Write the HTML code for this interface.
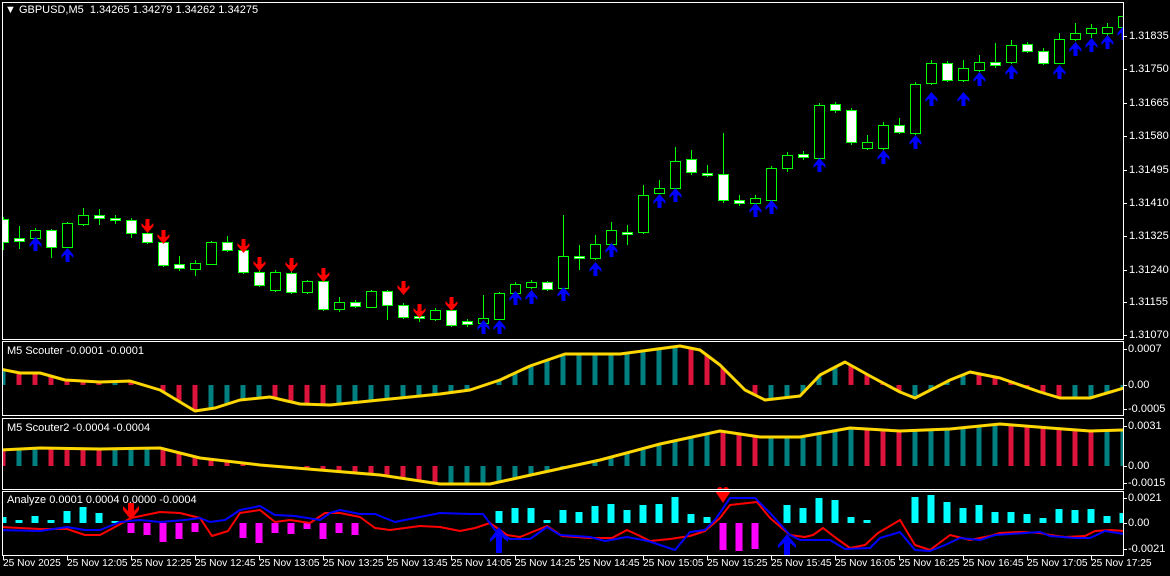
<!DOCTYPE html>
<html><head><meta charset="utf-8"><style>
html,body{margin:0;padding:0;background:#000;}
body{width:1170px;height:576px;overflow:hidden;position:relative;font-family:"Liberation Sans",sans-serif;font-size:11px;color:#fff;}
svg{position:absolute;left:0;top:0;}
.t{position:absolute;white-space:nowrap;line-height:12px;}
.tm{font-size:10.2px;}
</style></head><body>
<svg id="s" width="1170" height="576" xmlns="http://www.w3.org/2000/svg"></svg>
<div class="t" style="left:5px;top:4px">&#9660;&nbsp;GBPUSD,M5&nbsp; 1.34265 1.34279 1.34262 1.34275</div>
<div class="t" style="left:7px;top:345px">M5 Scouter -0.0001 -0.0001</div>
<div class="t" style="left:7px;top:422px">M5 Scouter2 -0.0004 -0.0004</div>
<div class="t" style="left:7px;top:494px">Analyze 0.0001 0.0004 0.0000 -0.0004</div>
<div class="t" style="left:1129px;top:30px">1.31835</div>
<div class="t" style="left:1129px;top:63px">1.31750</div>
<div class="t" style="left:1129px;top:97px">1.31665</div>
<div class="t" style="left:1129px;top:130px">1.31580</div>
<div class="t" style="left:1129px;top:164px">1.31495</div>
<div class="t" style="left:1129px;top:197px">1.31410</div>
<div class="t" style="left:1129px;top:230px">1.31325</div>
<div class="t" style="left:1129px;top:264px">1.31240</div>
<div class="t" style="left:1129px;top:296px">1.31155</div>
<div class="t" style="left:1129px;top:329px">1.31070</div>
<div class="t" style="left:1128px;top:343px">0.0007</div>
<div class="t" style="left:1128px;top:379px">0.00</div>
<div class="t" style="left:1128px;top:403px">-0.0005</div>
<div class="t" style="left:1128px;top:420px">0.0031</div>
<div class="t" style="left:1128px;top:460px">0.00</div>
<div class="t" style="left:1128px;top:477px">-0.0015</div>
<div class="t" style="left:1128px;top:492px">0.0021</div>
<div class="t" style="left:1128px;top:517px">0.00</div>
<div class="t" style="left:1128px;top:543px">-0.0021</div>
<div class="t tm" style="left:3px;top:558px">25 Nov 2025</div>
<div class="t tm" style="left:67px;top:558px">25 Nov 12:05</div>
<div class="t tm" style="left:131px;top:558px">25 Nov 12:25</div>
<div class="t tm" style="left:195px;top:558px">25 Nov 12:45</div>
<div class="t tm" style="left:259px;top:558px">25 Nov 13:05</div>
<div class="t tm" style="left:323px;top:558px">25 Nov 13:25</div>
<div class="t tm" style="left:387px;top:558px">25 Nov 13:45</div>
<div class="t tm" style="left:451px;top:558px">25 Nov 14:05</div>
<div class="t tm" style="left:515px;top:558px">25 Nov 14:25</div>
<div class="t tm" style="left:579px;top:558px">25 Nov 14:45</div>
<div class="t tm" style="left:643px;top:558px">25 Nov 15:05</div>
<div class="t tm" style="left:707px;top:558px">25 Nov 15:25</div>
<div class="t tm" style="left:771px;top:558px">25 Nov 15:45</div>
<div class="t tm" style="left:835px;top:558px">25 Nov 16:05</div>
<div class="t tm" style="left:899px;top:558px">25 Nov 16:25</div>
<div class="t tm" style="left:963px;top:558px">25 Nov 16:45</div>
<div class="t tm" style="left:1027px;top:558px">25 Nov 17:05</div>
<div class="t tm" style="left:1091px;top:558px">25 Nov 17:25</div>
<script>
var S=document.getElementById('s'),h='';
function R(x,y,w,hh,f){h+='<rect x="'+x+'" y="'+y+'" width="'+w+'" height="'+hh+'" fill="'+f+'"/>';}
function L(pts,c,w){h+='<polyline points="'+pts.map(function(p){return p[0]+','+p[1]}).join(' ')+'" fill="none" stroke="'+c+'" stroke-width="'+w+'" stroke-linejoin="round"/>';}
var C=[[219,242,1,217,250],[238,241,1,226,249],[230,238,0,228,243],[230,247,1,229,258],[223,247,0,222,248],[215,224,0,208,226],[215,218,1,209,225],[218,220,1,215,224],[220,233,1,218,238],[233,242,1,231,244],[242,265,1,240,267],[264,268,1,256,271],[263,269,0,260,276],[242,264,0,241,265],[242,250,1,236,252],[250,272,1,248,274],[272,285,1,270,287],[272,290,0,270,292],[273,292,1,271,294],[281,292,0,280,294],[281,309,1,280,311],[302,309,0,297,312],[302,306,1,300,308],[291,307,0,290,308],[291,305,1,290,320],[305,317,1,303,319],[316,318,1,312,322],[310,319,0,308,321],[310,325,1,308,327],[321,324,1,319,327],[318,323,0,295,330],[293,319,0,292,320],[284,293,0,282,295],[282,287,0,280,289],[282,289,1,281,291],[256,288,0,215,300],[256,258,1,245,270],[244,258,0,235,260],[230,244,0,222,246],[232,234,1,225,245],[195,232,0,185,234],[188,193,0,180,196],[161,188,0,147,190],[159,172,1,150,175],[173,175,1,165,177],[174,200,1,133,203],[200,203,1,195,206],[198,203,0,195,206],[168,200,0,166,202],[155,168,0,152,172],[154,157,1,151,160],[105,158,0,103,160],[104,110,1,102,113],[110,142,1,108,145],[142,148,0,135,150],[125,148,0,122,150],[125,132,1,118,134],[84,133,0,82,135],[63,83,0,60,85],[63,80,1,61,82],[68,80,0,60,82],[62,70,0,55,72],[62,65,1,43,68],[45,62,0,40,64],[44,51,1,42,53],[51,63,1,48,65],[39,63,0,33,64],[33,39,0,23,41],[28,33,0,24,38],[27,33,0,23,36],[16,27,0,2,29]];
function up(cx,y,c){h+='<polygon points="'+cx+','+y+' '+(cx+6)+','+(y+7)+' '+(cx+6)+','+(y+10)+' '+(cx+3)+','+(y+7)+' '+(cx+2)+','+(y+7)+' '+(cx+2)+','+(y+14)+' '+(cx-2)+','+(y+14)+' '+(cx-2)+','+(y+7)+' '+(cx-3)+','+(y+7)+' '+(cx-6)+','+(y+10)+' '+(cx-6)+','+(y+7)+'" fill="'+c+'"/>';}
function dn(cx,y,c){h+='<polygon points="'+cx+','+(y+14)+' '+(cx+6)+','+(y+7)+' '+(cx+6)+','+(y+4)+' '+(cx+3)+','+(y+7)+' '+(cx+2)+','+(y+7)+' '+(cx+2)+','+y+' '+(cx-2)+','+y+' '+(cx-2)+','+(y+7)+' '+(cx-3)+','+(y+7)+' '+(cx-6)+','+(y+4)+' '+(cx-6)+','+(y+7)+'" fill="'+c+'"/>';}
h+='<clipPath id="cm"><rect x="3" y="3" width="1120" height="336"/></clipPath><g clip-path="url(#cm)">';
C.forEach(function(c,i){var x=3+16*i;
 h+='<line x1="'+(x+0.5)+'" y1="'+c[3]+'" x2="'+(x+0.5)+'" y2="'+c[4]+'" stroke="#00ff00" stroke-width="1"/>';
 h+='<rect x="'+(x-4.5)+'" y="'+(c[0]+0.5)+'" width="10" height="'+(c[1]-c[0])+'" fill="'+(c[2]?'#fff':'#000')+'" stroke="#00ff00" stroke-width="1"/>';});
[[35,237],[67,248],[483,320],[499,320],[515,291],[531,290],[563,287],[595,262],[611,243],[659,194],[675,188],[755,203],[771,200],[819,158],[883,150],[915,135],[931,92],[963,92],[979,72],[1011,65],[1059,65],[1075,42],[1091,38],[1107,35],[1123,26]].forEach(function(a){up(a[0]+0.5,a[1],'#0000ff');});
[[147,219],[163,230],[243,239],[259,257],[291,258],[323,268],[403,281],[419,304],[451,297]].forEach(function(a){dn(a[0]+0.5,a[1],'#ff0000');});
h+='</g>';
function interp(P,x){for(var i=0;i<P.length-1;i++){if(x>=P[i][0]&&x<=P[i+1][0]){var t=(x-P[i][0])/(P[i+1][0]-P[i][0]);return P[i][1]+t*(P[i+1][1]-P[i][1]);}}return P[P.length-1][1];}
function pane(P,z,clip){h+='<g clip-path="url(#'+clip+')">';
 for(var i=0;i<71;i++){var x=3+16*i,y=interp(P,x),y2=interp(P,x+6),y0=interp(P,x-6);var col=(y2>y0)?'#dc143c':'#008080';if(Math.abs(y-z)<2)continue;R(x-2.5,Math.min(y,z),5,Math.abs(y-z),col);}
 L(P,'#ffd700',3);h+='</g>';}
h+='<clipPath id="c1"><rect x="3" y="343" width="1120" height="72"/></clipPath><clipPath id="c2"><rect x="3" y="420" width="1120" height="69"/></clipPath><clipPath id="c3"><rect x="3" y="493" width="1120" height="62"/></clipPath>';
pane([[0,369],[20,373],[40,373],[65,380],[100,382],[130,381],[160,390],[195,411],[215,408],[240,400],[270,397],[300,404],[330,405],[370,401],[400,398],[440,394],[470,390],[500,380],[530,366],[565,354],[620,354],[650,350],[680,346],[700,350],[720,365],[745,390],[765,400],[800,396],[820,375],[845,362],[870,376],[900,392],[915,398],[950,380],[970,372],[1000,378],[1040,392],[1060,398],[1090,398],[1124,388]],385,'c1');
pane([[0,450],[40,448],[100,449],[160,448],[200,458],[260,465],[320,470],[380,475],[440,484],[490,484],[540,473],[600,460],[660,444],[720,431],[760,437],[800,437],[850,428],[900,431],[950,429],[1000,424],[1050,428],[1090,431],[1124,430]],466,'c2');
h+='<g clip-path="url(#c3)">';
var hv={3:6,19:3,35:7,51:3,67:12,83:16,99:10,115:2,131:-10,147:-12,163:-19,179:-16,195:-9,243:-15,259:-20,275:-10,291:-11,307:-6,323:-16,339:-10,355:-12,499:12,515:15,531:15,547:3,563:13,579:11,595:17,611:19,627:13,643:18,659:19,675:26,691:9,707:6,723:-27,739:-28,755:-26,787:18,803:15,819:25,835:23,851:6,867:3,915:26,931:28,947:21,963:15,979:18,995:11,1011:11,1027:9,1043:5,1059:14,1075:13,1091:14,1107:7,1123:10};
for(var k in hv){var v=hv[k],x=+k;R(x-3.5,v>0?523-v:523,7,Math.abs(v),v>0?'#00ffff':'#ff00ff');}
L([[0,527],[40,529],[67,529],[85,535],[100,535],[115,527],[131,518],[160,512],[180,513],[200,518],[212,536],[228,531],[240,513],[260,510],[275,522],[290,520],[310,523],[325,513],[340,513],[360,517],[375,528],[390,530],[405,528],[420,526],[440,527],[460,531],[475,528],[490,523],[507,535],[520,537],[547,526],[562,536],[590,538],[612,538],[627,530],[640,536],[650,541],[670,539],[690,536],[705,531],[720,518],[730,505],[757,502],[770,518],[790,535],[805,537],[813,535],[823,528],[836,538],[850,548],[865,545],[878,533],[900,520],[915,545],[930,550],[950,535],[970,540],[990,536],[1000,533],[1020,532],[1040,533],[1050,535],[1065,537],[1085,536],[1095,531],[1110,530],[1124,531]],'#ff0000',2);
L([[0,530],[40,531],[67,527],[85,530],[100,530],[120,522],[140,520],[160,522],[185,520],[200,518],[210,522],[225,520],[240,510],[260,506],[275,515],[295,516],[320,520],[330,513],[340,510],[360,514],[375,514],[395,522],[420,517],[440,513],[470,514],[483,514],[495,530],[510,539],[530,539],[547,527],[560,535],[590,537],[605,541],[627,537],[648,541],[660,545],[675,550],[690,532],[705,530],[715,520],[730,498],[755,498],[770,513],[790,535],[800,540],[830,540],[845,549],[870,548],[880,538],[900,532],[915,550],[930,551],[945,545],[960,538],[980,540],[995,535],[1025,533],[1040,532],[1050,536],[1075,538],[1090,538],[1105,531],[1124,534]],'#0000ff',2);
h+='</g>';
h+='<polygon points="131,520 139,510 139,506 134,511 134,503 128,503 128,511 123,506 123,510" fill="#ff0000"/>';
h+='<path d="M715,491 L731,491 L723,503 Z M717,490 a3,3 0 0 1 6,0 a3,3 0 0 1 6,0" fill="#ff0000"/>';
h+='<polygon points="499,527 508,539 508,542 502,537 502,553 496,553 496,537 490,542 490,539" fill="#0000ff"/>';
h+='<polygon points="787,534 796,545 796,548 790,543 790,555 784,555 784,543 778,548 778,545" fill="#0000ff"/>';
function F(x,y,w,hh){h+='<rect x="'+x+'.5" y="'+y+'.5" width="'+w+'" height="'+hh+'" fill="none" stroke="#fff" stroke-width="1"/>';}
F(2,2,1121,337);F(2,341,1121,74);F(2,418,1121,71);F(2,491,1121,64);
for(var i=0;i<18;i++){var x=3+64*i;h+='<line x1="'+(x+0.5)+'" y1="556" x2="'+(x+0.5)+'" y2="560" stroke="#fff"/>';}
[36,69,103,136,170,203,236,270,302,335,349,385,409,426,466,483,498,523,549].forEach(function(y){h+='<line x1="1123" y1="'+(y+0.5)+'" x2="1127" y2="'+(y+0.5)+'" stroke="#fff"/>';});
S.innerHTML=h;
</script>
</body></html>
